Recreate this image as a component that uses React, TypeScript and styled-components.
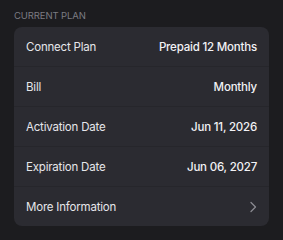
import React from "react";
import styled, { createGlobalStyle } from "styled-components";

const Global = createGlobalStyle`
  html, body { margin: 0; padding: 0; background: #1c1c1f; }
  body { font-family: Inter, "Noto Sans", sans-serif; -webkit-font-smoothing: antialiased; }
`;

const Page = styled.div`
  width: 283px;
  height: 240px;
  box-sizing: border-box;
  padding: 10px 14px 0 14px;
  background: #1c1c1f;
`;

const SectionTitle = styled.div`
  font-size: 9.5px;
  line-height: 12px;
  letter-spacing: -0.1px;
  color: #7b7b82;
  text-transform: uppercase;
  margin-bottom: 5px;
`;

const Card = styled.div`
  background: #2b2b31;
  border-radius: 8px;
  overflow: hidden;
  display: flex;
  flex-direction: column;
`;

const Row = styled.div<{ $last?: boolean }>`
  height: 39px;
  display: flex;
  align-items: center;
  justify-content: space-between;
  padding: 0 12px;
  border-bottom: ${(p) => (p.$last ? "none" : "1px solid #26262b")};
`;

const Label = styled.span`
  font-size: 11.5px;
  letter-spacing: -0.2px;
  color: #e6e6ea;
  font-weight: 400;
`;

const Value = styled.span`
  font-size: 11.5px;
  letter-spacing: -0.2px;
  color: #f2f2f5;
  font-weight: 500;
`;

const Chevron = () => (
  <svg width="8" height="12" viewBox="0 0 8 12" fill="none">
    <path d="M2 1.5 L6.5 6 L2 10.5" stroke="#8a8a91" strokeWidth="1.3" strokeLinecap="round" strokeLinejoin="round" />
  </svg>
);

const rows = [
  { label: "Connect Plan", value: "Prepaid 12 Months" },
  { label: "Bill", value: "Monthly" },
  { label: "Activation Date", value: "Jun 11, 2026" },
  { label: "Expiration Date", value: "Jun 06, 2027" },
];

export default function App() {
  return (
    <>
      <Global />
      <Page>
        <SectionTitle>Current Plan</SectionTitle>
        <Card>
          {rows.map((r) => (
            <Row key={r.label}>
              <Label>{r.label}</Label>
              <Value>{r.value}</Value>
            </Row>
          ))}
          <Row $last>
            <Label>More Information</Label>
            <Chevron />
          </Row>
        </Card>
      </Page>
    </>
  );
}
